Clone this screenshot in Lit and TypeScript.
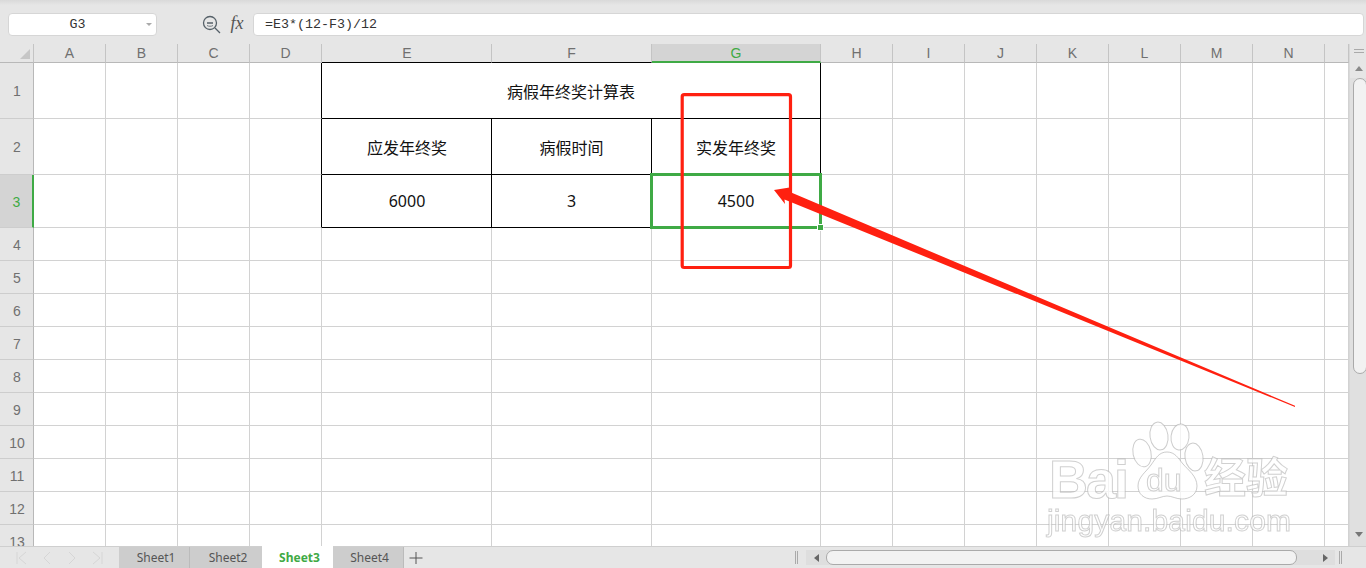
import { LitElement, html, css, svg } from "lit";
import { customElement } from "lit/decorators.js";

const COLS = ["A","B","C","D","E","F","G","H","I","J","K","L","M","N",""];
const ROW_H = [56,56,53,33,33,33,33,33,33,33,33,33,33];

@customElement("app-root")
export class AppRoot extends LitElement {
  static styles = css`
    :host { display:block; width:1366px; height:568px; position:relative; overflow:hidden; background:#e6e6e6; font-family:"Noto Sans","Noto Sans CJK SC",sans-serif; }
    .page { display:flex; flex-direction:column; height:568px; }
    .toolbar { height:44px; box-sizing:border-box; flex:none; display:flex; align-items:flex-start; padding:13px 2px 0 8px; background:linear-gradient(#d9d9d9 0,#e6e6e6 5px); }
    .box { box-sizing:border-box; height:23px; background:#fff; border:1px solid #d6d6d6; border-radius:4px; font:13.33px/21px "Liberation Mono",monospace; color:#333; }
    .name { width:149px; display:flex; position:relative; justify-content:center; padding-right:10px; }
    .caret { position:absolute; right:4px; top:9px; border:3px solid transparent; border-top:3px solid #aaa; border-bottom:0; }
    .zoom { margin-left:43px; margin-top:1px; width:22px; height:22px; flex:none; }
    .fx { width:18px; margin-left:6px; margin-right:7px; flex:none; font:italic 18px/21px "Liberation Serif",serif; color:#555; text-align:center; }
    .formula { flex:1; padding-left:11px; }
    .main { flex:1; min-height:0; display:flex; overflow:hidden; }
    .grid { flex:none; width:1349px; display:grid; grid-template-columns:34px repeat(4,72px) 170px 160px 169px repeat(7,72px) 24px; grid-auto-rows:33px; }
    .cell { box-sizing:border-box; border-right:1px solid #d2d2d2; border-bottom:1px solid #d2d2d2; display:flex; align-items:center; justify-content:center; font-size:16px; color:#111; background:#fff; }
    .hd { background:#e6e6e6; color:#707070; font:14px "Liberation Sans",sans-serif; border-right-color:#c4c4c4; border-bottom-color:#b8b8b8; }
    .corner { position:relative; }
    .corner::after { content:""; position:absolute; right:3px; bottom:3px; border-style:solid; border-width:0 0 10px 10px; border-color:transparent transparent #c6c6c6 transparent; }
    .rh { border-bottom-color:#cdcdcd; border-right-color:#b8b8b8; padding:1px 0 0 1px; }
    .act { background:#d4d4d4; color:#3faa45; }
    .act-c { border-bottom:2px solid #3faa45; }
    .act-r { border-right:2px solid #3faa45; }
    .kr { border-right-color:#000; }
    .kb { border-bottom-color:#000; }
    .nudge { padding-left:1px; }
    .merged { grid-column:span 3; }
    .current { position:relative; z-index:1; }
    .sel { position:absolute; left:-2px; right:-2px; top:-2px; bottom:-2px; border:3px solid #3faa45; }
    .handle { position:absolute; right:-3px; bottom:-3px; width:5px; height:5px; background:#3faa45; outline:1px solid #fff; }
    .vbar { flex:1; background:#e0e0e0; display:flex; flex-direction:column; align-items:center; border-left:1px solid #d8d8d8; box-sizing:border-box; }
    .vtop { flex:none; width:100%; height:14px; background:#e6e6e6; display:flex; justify-content:center; align-items:center; }
    .grip-h { width:10px; height:2px; border-top:1px solid #aaa; border-bottom:1px solid #aaa; }
    .vup { flex:none; width:100%; height:20px; background:#e6e6e6; display:flex; justify-content:center; align-items:center; }
    .tri-u { border:4px solid transparent; border-bottom:5px solid #8a8a8a; border-top:0; }
    .vthumb { flex:none; width:14px; height:296px; box-sizing:border-box; margin-left:3px; background:#f2f2f2; border:1px solid #aaa; border-radius:7px; }
    .tri-d { border:4px solid transparent; border-top:5px solid #777; border-bottom:0; margin-top:158px; }
    .bottom { flex:none; height:22px; box-sizing:border-box; border-top:1px solid #cfcfcf; display:flex; background:#e6e6e6; font-size:12px; color:#555; }
    .nav { width:119px; flex:none; display:flex; align-items:center; }
    .tab { box-sizing:border-box; width:71px; height:21px; background:#cdcdcd; border-right:1px solid #bbb; display:flex; align-items:center; justify-content:center; padding-left:4px; }
    .tab.on { background:#fff; color:#3faa45; font-weight:700; border-right:0; width:71px; margin-top:-1px; height:22px; }
    .tab.s2 { width:72px; border-right:0; }
    .tab.s4 { padding-left:3px; }
    .plus { width:24px; flex:none; }
    .spacer { flex:1; }
    .grip-v { height:13px; margin-top:4px; flex:none; border-left:1px solid #aaa; border-right:1px solid #aaa; width:1px; }
    .hscroll { flex:none; width:529px; height:15px; margin-top:3px; margin-left:8px; background:#dedede; display:flex; align-items:center; }
    .arrow { flex:none; width:20px; display:flex; justify-content:center; }
    .arrow.end { width:38px; justify-content:flex-start; padding-left:26px; box-sizing:border-box; }
    .tri-l { border:4px solid transparent; border-right:5px solid #666; border-left:0; }
    .tri-r { border:4px solid transparent; border-left:5px solid #666; border-right:0; }
    .hthumb { flex:none; width:471px; height:15px; box-sizing:border-box; background:#f2f2f2; border:1px solid #aaa; border-radius:7px; }
    .end-grip { margin-left:4px; margin-right:24px; }
    .overlay { position:absolute; left:0; top:0; pointer-events:none; z-index:2; }
    .wm { fill:rgba(255,255,255,.72); stroke:rgba(170,170,170,.55); stroke-width:1; font-family:"Liberation Sans",sans-serif; font-weight:700; filter:blur(.4px); }
    .wm.cj { font-family:"Noto Sans CJK SC",sans-serif; }
    .wm.thin { font-weight:400; }
  `;

  private tableCell(r: number, c: number) {
    const inTable = r <= 3 && c >= 3 && c <= 6;
    if (!inTable) return html`<div class="cell"></div>`;
    if (c === 3) return html`<div class="cell kr"></div>`;
    if (r === 1) return c === 4 ? html`<div class="cell merged kr kb">病假年终奖计算表</div>` : null;
    const data: Record<number,string[]> = { 2:["应发年终奖","病假时间","实发年终奖"], 3:["6000","3","4500"] };
    const text = data[r][c-4];
    if (r === 3 && c === 6) return html`<div class="cell kr kb current">${text}<div class="sel"></div><div class="handle"></div></div>`;
    return html`<div class="cell kr kb ${c===4?"nudge":""}">${text}</div>`;
  }

  render() {
    const rowsCss = `19px ${ROW_H.map(h=>h+"px").join(" ")}`;
    return html`
    <div class="page">
      <div class="toolbar">
        <div class="box name">G3<span class="caret"></span></div>
        <svg class="zoom" viewBox="0 0 22 22" fill="none" stroke="#556068" stroke-width="1.3">
          <circle cx="10" cy="9" r="6.5"/><path d="M15 14l5 5M7 9h6" /><path d="M7 11.5c1.5 1 4.5 1 6 0" stroke-width=".8"/>
        </svg>
        <div class="fx">fx</div>
        <div class="box formula">=E3*(12-F3)/12</div>
      </div>
      <div class="main">
        <div class="grid" style="grid-template-rows:${rowsCss}">
          <div class="cell hd corner"></div>
          ${COLS.map((n,i)=>html`<div class="cell hd ${n==="G"?"act act-c":""} ${i>=4&&i<=5?"kb":""} ${i===4?"nudge":""}">${n}</div>`)}
          ${ROW_H.map((_,ri)=>{
            const r = ri+1;
            return html`<div class="cell hd rh ${r===3?"act act-r":""}">${r}</div>
            ${COLS.map((_n,c)=>this.tableCell(r,c))}`;
          })}
        </div>
        <div class="vbar">
          <div class="vtop"><div class="grip-h"></div></div>
          <div class="vup"><div class="tri-u"></div></div>
          <div class="vthumb"></div>
          <div class="tri-d"></div>
        </div>
      </div>
      <div class="bottom">
        <div class="nav">
          <svg width="119" height="21" fill="none" stroke="#d6d6d6" stroke-width="1">
            <path d="M17 5v12M26 5l-7 6 7 6M50 5l-6 6 6 6M69 5l6 6-6 6M93 5l7 6-7 6M102 5v12"/>
          </svg>
        </div>
        <div class="tab">Sheet1</div>
        <div class="tab s2">Sheet2</div>
        <div class="tab on">Sheet3</div>
        <div class="tab s4">Sheet4</div>
        <svg class="plus" width="24" height="21" fill="none" stroke="#555" stroke-width="1"><path d="M12 5v12M5.500 11h13"/></svg>
        <div class="spacer"></div>
        <div class="grip-v"></div>
        <div class="hscroll">
          <div class="arrow"><div class="tri-l"></div></div>
          <div class="hthumb"></div>
          <div class="arrow end"><div class="tri-r"></div></div>
        </div>
        <div class="grip-v end-grip"></div>
      </div>
    </div>
    <svg class="overlay" width="1366" height="568">
      ${svg`
      <rect x="682.200" y="94.700" width="108.300" height="172.800" rx="2" fill="none" stroke="#ff2010" stroke-width="3.200"/>
      <polygon points="774,190 789.500,187.500 790,192 1295,405.800 1295,407 784.500,199.500 785,204" fill="#ff2010"/>
      <g fill="rgba(255,255,255,.72)" stroke="rgba(170,170,170,.6)" stroke-width="1">
        <ellipse cx="1142" cy="453" rx="9" ry="14" transform="rotate(-12 1142 453)"/>
        <ellipse cx="1159" cy="436" rx="9" ry="14" transform="rotate(-8 1159 436)"/>
        <ellipse cx="1180" cy="437" rx="9" ry="13" transform="rotate(6 1180 437)"/>
        <ellipse cx="1194" cy="457" rx="9" ry="14" transform="rotate(-8 1194 457)"/>
        <path d="M1167 452c8 0 11 6 16 12 5 6 14 12 14 22 0 9-8 13-15 13-6 0-10-3-15-3s-9 3-15 3c-8 0-14-5-14-13 0-9 8-14 13-21 5-7 8-13 16-13z"/>
      </g>
      <text class="wm" x="1049" y="498" font-size="54" textLength="80">Bai</text>
      <text class="wm thin" x="1146" y="491" font-size="32">du</text>
      <text class="wm cj" x="1204" y="493" font-size="42">经验</text>
      <text class="wm thin" x="1047" y="531" font-size="30" textLength="244">jingyan.baidu.com</text>
      `}
    </svg>`;
  }
}
